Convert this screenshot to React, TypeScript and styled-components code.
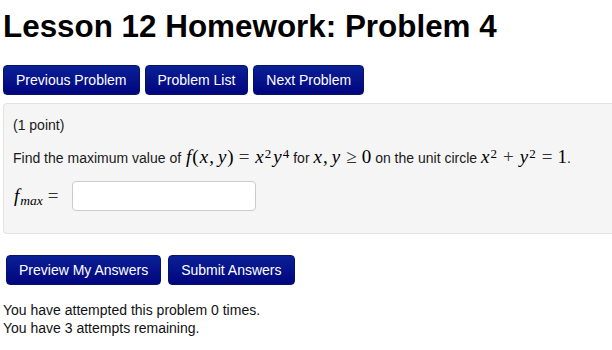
import React from "react";
import styled, { createGlobalStyle } from "styled-components";

const Global = createGlobalStyle`
  html, body { margin: 0; padding: 0; background: #fff; }
  body { font-family: "Liberation Sans", Arial, sans-serif; color: #1a1a1a; overflow: hidden; }
`;

const Page = styled.div`
  padding: 0 0 0 3px;
`;

const Title = styled.h1`
  margin: 9px 0 0;
  font-size: 31.4px;
  line-height: 36px;
  font-weight: bold;
  color: #000;
`;

const ButtonRow = styled.div<{ $top: number; $left?: number; $gap: number }>`
  display: flex;
  gap: ${(p) => p.$gap}px;
  margin-top: ${(p) => p.$top}px;
  margin-left: ${(p) => p.$left ?? 0}px;
`;

const NavButton = styled.button`
  height: 30px;
  padding: 0 12px;
  border: 1px solid #071466;
  border-radius: 4px;
  background: linear-gradient(to bottom, #0b2096, #00057d);
  color: #fff;
  font-family: "Liberation Sans", Arial, sans-serif;
  font-size: 14px;
  line-height: 28px;
  white-space: nowrap;
  cursor: pointer;
`;

const ProblemBox = styled.div`
  margin-top: 8px;
  height: 131px;
  box-sizing: border-box;
  background: #f5f5f5;
  border: 1px solid #e3e3e3;
  border-right: none;
  border-radius: 4px 0 0 4px;
  padding: 11px 9px 0;
  font-size: 14px;
`;

const Line = styled.div<{ $top: number }>`
  margin-top: ${(p) => p.$top}px;
  height: 20px;
  line-height: 20px;
  white-space: nowrap;
`;

const AnswerRow = styled.div`
  margin-top: 14px;
  display: flex;
  align-items: center;
  height: 30px;
`;

const M = styled.span`
  font-family: "Liberation Serif", "Times New Roman", serif;
  font-style: italic;
  font-size: 19px;
  margin: 0 1px;
  color: #000;
`;

const R = styled.span`
  font-family: "Liberation Serif", "Times New Roman", serif;
  font-style: normal;
  font-size: 19px;
  color: #000;
`;

const Op = styled.span`
  font-family: "Liberation Serif", "Times New Roman", serif;
  font-style: normal;
  font-size: 19px;
  margin: 0 5px;
  color: #333;
`;

const Sup = styled.sup`
  font-family: "Liberation Serif", "Times New Roman", serif;
  font-style: normal;
  font-size: 13px;
  vertical-align: 5px;
  line-height: 0;
  margin-right: 1px;
  color: #000;
`;

const Sub = styled.sub`
  font-family: "Liberation Serif", "Times New Roman", serif;
  font-style: italic;
  font-size: 13.5px;
  vertical-align: -3px;
  line-height: 0;
  color: #000;
`;

const MathGroup = styled.span`
  white-space: nowrap;
`;

const Gap = styled.span<{ $w: number }>`
  display: inline-block;
  width: ${(p) => p.$w}px;
`;

const AnswerInput = styled.input`
  width: 184px;
  height: 30px;
  box-sizing: border-box;
  border: 1px solid #ccc;
  border-radius: 4px;
  background: #fff;
  margin-left: 8px;
  padding: 0 6px;
  font-size: 14px;
`;

const Info = styled.div`
  margin-top: 16px;
  font-size: 14px;
  line-height: 18px;
  color: #111;
`;

export default function App() {
  return (
    <>
      <Global />
      <Page>
        <Title>Lesson 12 Homework: Problem 4</Title>
        <ButtonRow $top={20} $gap={5}>
          <NavButton>Previous Problem</NavButton>
          <NavButton>Problem List</NavButton>
          <NavButton>Next Problem</NavButton>
        </ButtonRow>
        <ProblemBox>
          <Line $top={0}>(1 point)</Line>
          <Line $top={12}>
            Find the maximum value of<Gap $w={4} />
            <M>f</M>
            <R>(</R>
            <M>x</M>
            <R>,</R>
            <Gap $w={3} />
            <M>y</M>
            <R>)</R>
            <Op>=</Op>
            <M>x</M>
            <Sup>2</Sup>
            <M>y</M>
            <Sup>4</Sup>
            <Gap $w={3} />
            for<Gap $w={3} />
            <M>x</M>
            <R>,</R>
            <Gap $w={3} />
            <M>y</M>
            <Op>≥</Op>
            <R>0</R>
            <Gap $w={4} />
            on the unit circle<Gap $w={3} />
            <M>x</M>
            <Sup>2</Sup>
            <Op>+</Op>
            <M>y</M>
            <Sup>2</Sup>
            <Op>=</Op>
            <R>1</R>.
          </Line>
          <AnswerRow>
            <MathGroup>
              <M>f</M>
              <Sub>max</Sub>
              <Op>=</Op>
            </MathGroup>
            <AnswerInput type="text" />
          </AnswerRow>
        </ProblemBox>
        <ButtonRow $top={21} $left={3} $gap={7}>
          <NavButton>Preview My Answers</NavButton>
          <NavButton>Submit Answers</NavButton>
        </ButtonRow>
        <Info>
          You have attempted this problem 0 times.
          <br />
          You have 3 attempts remaining.
        </Info>
      </Page>
    </>
  );
}
